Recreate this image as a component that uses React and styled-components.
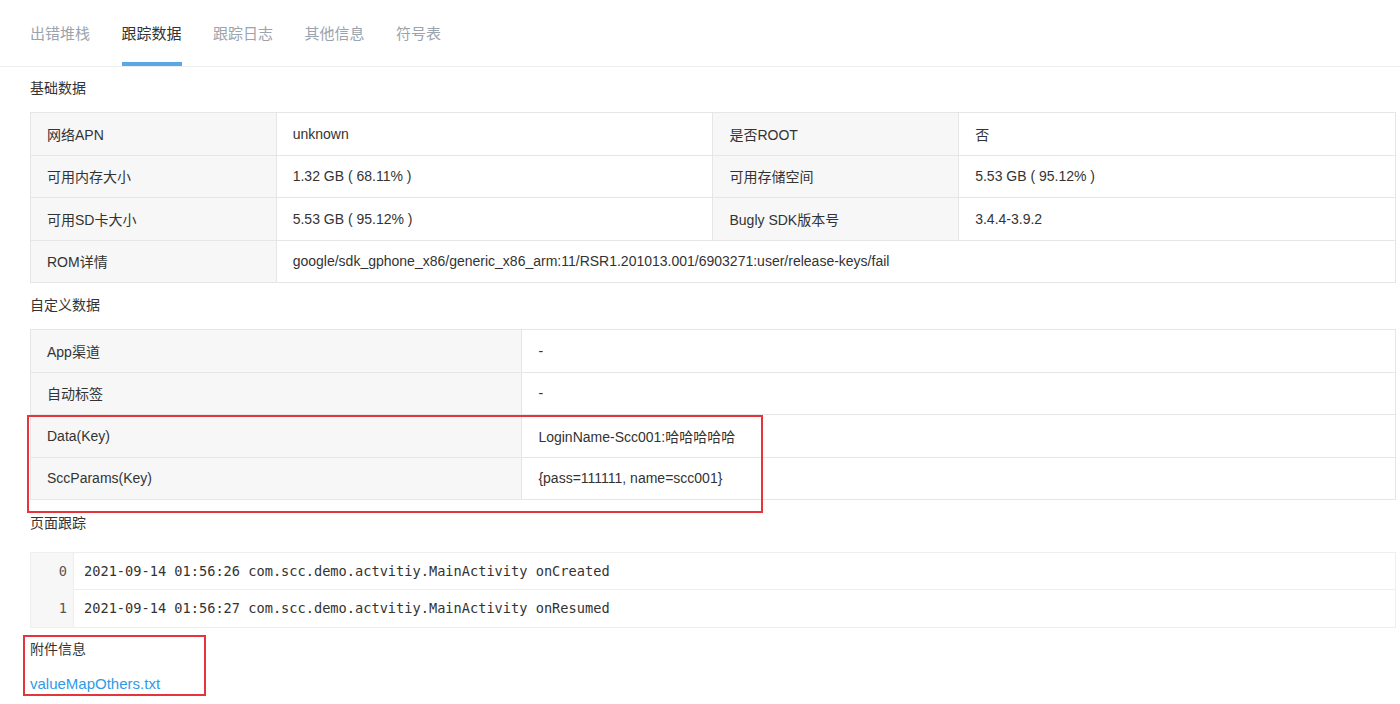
import styled, { createGlobalStyle } from "styled-components";

const GlobalStyle = createGlobalStyle`
  html, body {
    margin: 0;
    padding: 0;
    background: #fff;
  }
  body {
    font-family: "Liberation Sans", "Noto Sans CJK SC", sans-serif;
    color: #333;
  }
`;

const Page = styled.div`
  position: relative;
  width: 1400px;
  min-height: 704px;
`;

const TabBar = styled.div`
  display: flex;
  height: 67px;
  padding-left: 30px;
  gap: 31.5px;
  border-bottom: 1px solid #eceef0;
  box-sizing: border-box;
`;

const Tab = styled.div`
  position: relative;
  height: 66px;
  line-height: 68px;
  font-size: 15px;
  color: ${(p) => (p.$active ? "#333" : "#9aa4ae")};

  &::after {
    content: "";
    display: ${(p) => (p.$active ? "block" : "none")};
    position: absolute;
    left: 0;
    right: 0;
    bottom: 0;
    height: 4px;
    background: #58a8e6;
  }
`;

const Content = styled.div`
  padding: 0 4px 0 30px;
`;

const SectionTitle = styled.div`
  font-size: 14px;
  line-height: 20px;
  margin: ${(p) => p.$top || 12}px 0 ${(p) => p.$bottom || 14}px;
  color: #333;
`;

const InfoTable = styled.div`
  display: grid;
  grid-template-columns: ${(p) => p.$cols};
  border-top: 1px solid #e6e6e6;
  border-left: 1px solid #e6e6e6;
`;

const Cell = styled.div`
  box-sizing: border-box;
  height: 42.5px;
  display: flex;
  align-items: center;
  padding: 0 16px;
  font-size: 14px;
  color: #333;
  background: ${(p) => (p.$label ? "#f7f7f7" : "#fff")};
  border-right: 1px solid #e6e6e6;
  border-bottom: 1px solid #e6e6e6;
  grid-column: ${(p) => p.$span || "auto"};
  white-space: nowrap;
`;

const CodeBlock = styled.div`
  display: grid;
  grid-template-columns: 43px 1fr;
  margin-top: 19px;
  border: 1px solid #eeeeee;
  font-family: "DejaVu Sans Mono", "Liberation Mono", monospace;
  font-size: 13.65px;
  color: #333;
`;

const LineNo = styled.div`
  box-sizing: border-box;
  height: 37px;
  line-height: 37px;
  text-align: right;
  padding-right: 6px;
  background: #f7f7f7;
  border-right: 1px solid #eeeeee;
  color: #555;
`;

const CodeLine = styled.div`
  box-sizing: border-box;
  height: 37px;
  line-height: 37px;
  padding-left: 10px;
  border-bottom: ${(p) => (p.$last ? "none" : "1px solid #eeeeee")};
  white-space: pre;
`;

const FileLink = styled.a`
  display: block;
  margin-top: 15px;
  font-size: 15px;
  line-height: 20px;
  color: #2f9ae8;
  text-decoration: none;
`;

const Highlight = styled.div`
  position: absolute;
  left: ${(p) => p.$x}px;
  top: ${(p) => p.$y}px;
  width: ${(p) => p.$w}px;
  height: ${(p) => p.$h}px;
  box-sizing: border-box;
  border: 2px solid #e5343a;
  pointer-events: none;
`;

const tabs = ["出错堆栈", "跟踪数据", "跟踪日志", "其他信息", "符号表"];

const basic = [
  ["网络APN", "unknown", "是否ROOT", "否"],
  ["可用内存大小", "1.32 GB ( 68.11% )", "可用存储空间", "5.53 GB ( 95.12% )"],
  ["可用SD卡大小", "5.53 GB ( 95.12% )", "Bugly SDK版本号", "3.4.4-3.9.2"],
];

const custom = [
  ["App渠道", "-"],
  ["自动标签", "-"],
  ["Data(Key)", "LoginName-Scc001:哈哈哈哈哈"],
  ["SccParams(Key)", "{pass=111111, name=scc001}"],
];

const trace = [
  "2021-09-14 01:56:26 com.scc.demo.actvitiy.MainActivity onCreated",
  "2021-09-14 01:56:27 com.scc.demo.actvitiy.MainActivity onResumed",
];

export default function App() {
  return (
    <Page>
      <GlobalStyle />
      <TabBar>
        {tabs.map((t) => (
          <Tab key={t} $active={t === "跟踪数据"}>
            {t}
          </Tab>
        ))}
      </TabBar>

      <Content>
        <SectionTitle $top={11}>基础数据</SectionTitle>
        <InfoTable $cols="18% 32% 18% 32%">
          {basic.map((row) =>
            row.map((v, i) => (
              <Cell key={row[0] + i} $label={i % 2 === 0}>
                {v}
              </Cell>
            ))
          )}
          <Cell $label>ROM详情</Cell>
          <Cell $span="span 3">
            google/sdk_gphone_x86/generic_x86_arm:11/RSR1.201013.001/6903271:user/release-keys/fail
          </Cell>
        </InfoTable>

        <SectionTitle>自定义数据</SectionTitle>
        <InfoTable $cols="36% 64%">
          {custom.flatMap(([k, v]) => [
            <Cell key={k} $label>
              {k}
            </Cell>,
            <Cell key={k + "v"}>{v}</Cell>,
          ])}
        </InfoTable>

        <SectionTitle $top={13} $bottom={0}>
          页面跟踪
        </SectionTitle>
        <CodeBlock>
          {trace.flatMap((line, i) => [
            <LineNo key={"n" + i}>{i}</LineNo>,
            <CodeLine key={"l" + i} $last={i === trace.length - 1}>
              {line}
            </CodeLine>,
          ])}
        </CodeBlock>

        <SectionTitle $top={11} $bottom={0}>
          附件信息
        </SectionTitle>
        <FileLink href="#">valueMapOthers.txt</FileLink>
      </Content>

      <Highlight $x={27} $y={415} $w={736} $h={98} />
      <Highlight $x={23} $y={635} $w={183} $h={61} />
    </Page>
  );
}
